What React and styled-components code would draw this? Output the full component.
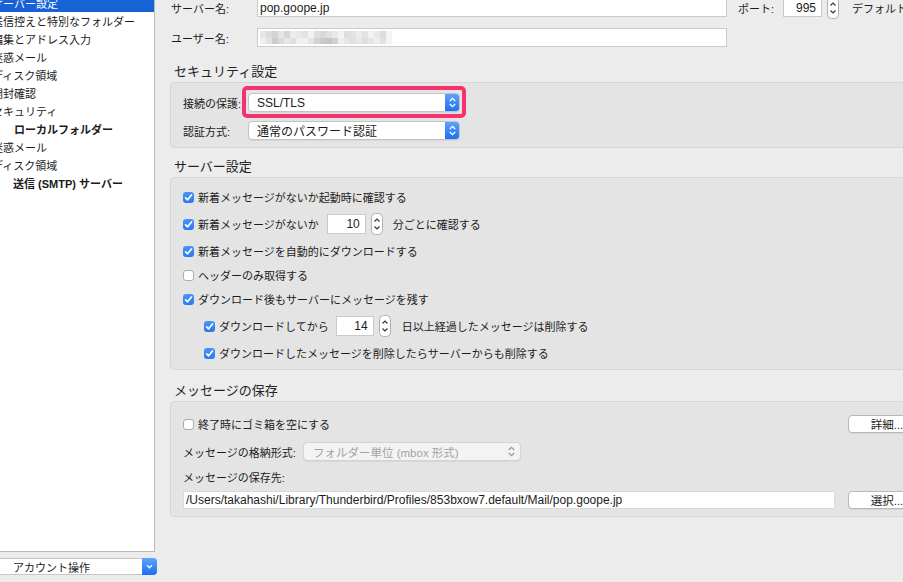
import React from 'react';
import styled, { createGlobalStyle } from 'styled-components';

const GlobalStyle = createGlobalStyle`
  html, body {
    margin: 0;
    padding: 0;
  }
  body {
    background: #ececec;
    font-family: "Liberation Sans", "Noto Sans CJK JP", sans-serif;
    font-size: 11px;
    color: #1c1c1c;
  }
`;

const Window = styled.div`
  width: 903px;
  height: 582px;
  overflow: hidden;
  display: flex;
  background: #ececec;
`;

/* left column: account tree + account actions */
const LeftColumn = styled.div`
  width: 157px;
  flex-shrink: 0;
  display: flex;
  flex-direction: column;
`;

const AccountTree = styled.div`
  width: 154px;
  height: 551px;
  background: #fff;
  border-right: 1px solid #b9b9b9;
  border-bottom: 1px solid #b9b9b9;
  overflow: hidden;
`;

const TreeList = styled.div`
  margin-top: -6px;
  display: flex;
  flex-direction: column;
`;

const TreeRow = styled.div`
  height: 18px;
  display: flex;
  align-items: center;
  white-space: nowrap;
  background: ${p => (p.$selected ? '#1762d6' : 'transparent')};
  color: ${p => (p.$selected ? '#fff' : '#1a1a1a')};
  font-weight: ${p => (p.$bold ? 'bold' : 'normal')};
  font-size: 11px;
`;

const TreeLabel = styled.span`
  margin-left: ${p => p.$indent}px;
`;

const AccountMenu = styled.div`
  margin-top: 6px;
  width: 157px;
  height: 17px;
  box-sizing: border-box;
  display: flex;
  align-items: center;
  background: #fff;
  border: 1px solid #c6c6c6;
  border-left: none;
  border-radius: 0 4px 4px 0;
  font-size: 11px;
`;

const MenuText = styled.span`
  flex: 1;
  padding-left: 13px;
`;

const MenuArrow = styled.div`
  width: 15px;
  height: 17px;
  margin: -1px -1px -1px 0;
  border-radius: 0 4px 4px 0;
  background: linear-gradient(#5fa3fb, #1b6ff0);
  display: flex;
  align-items: center;
  justify-content: center;
`;

/* right pane */
const Main = styled.div`
  width: 790px;
  flex-shrink: 0;
  padding-left: 13px;
  display: flex;
  flex-direction: column;
`;

const TopFields = styled.div`
  margin-top: -2px;
  padding-left: 1px;
  display: flex;
  flex-direction: column;
  gap: 11px;
`;

const FieldRow = styled.div`
  display: flex;
  align-items: center;
  height: ${p => p.$h || 19}px;
  padding-left: ${p => p.$indent || 0}px;
  white-space: nowrap;
`;

const FieldLabel = styled.span`
  width: ${p => p.$w}px;
  flex-shrink: 0;
  margin-left: ${p => p.$ml || 0}px;
`;

const TextBox = styled.div`
  width: ${p => (p.$w ? `${p.$w}px` : 'auto')};
  flex: ${p => (p.$grow ? 1 : 'none')};
  height: ${p => p.$h || 19}px;
  box-sizing: border-box;
  background: #fff;
  border: 1px solid ${p => p.$border || '#cacaca'};
  display: flex;
  align-items: center;
  justify-content: ${p => (p.$right ? 'flex-end' : 'flex-start')};
  padding: 0 ${p => (p.$right ? 5 : 2)}px 0 ${p => (p.$right ? 0 : 2)}px;
  font-size: 12px;
  margin-right: ${p => p.$mr || 0}px;
  overflow: hidden;
`;

const Mosaic = styled.div`
  display: grid;
  grid-template-columns: repeat(22, 6px);
  grid-auto-rows: 6.5px;
`;

const Cell = styled.span`
  background: ${p => p.$c};
`;

const StepperBox = styled.span`
  display: flex;
  margin-left: 5px;
  margin-right: ${p => p.$mr}px;
`;

const Heading = styled.div`
  font-size: 13px;
  height: 16px;
  line-height: 16px;
  margin: ${p => p.$mt}px 0 2px 4px;
  color: #222;
`;

const Group = styled.div`
  width: 765px;
  box-sizing: border-box;
  background: #e4e4e4;
  border: 1px solid #d6d6d6;
  border-radius: 4px;
  padding: ${p => p.$pt}px 8px ${p => p.$pb}px 12px;
  display: flex;
  flex-direction: column;
  gap: ${p => p.$gap}px;
`;

const StackedRows = styled.div`
  display: flex;
  flex-direction: column;
`;

const VSpace = styled.div`
  height: ${p => p.$h}px;
  flex-shrink: 0;
`;

const SelectWrap = styled.div`
  position: relative;
  width: ${p => p.$w}px;
`;

const Select = styled.div`
  height: 19px;
  box-sizing: border-box;
  display: flex;
  align-items: center;
  background: ${p => (p.$disabled ? '#f3f3f3' : '#fff')};
  border: 1px solid ${p => (p.$disabled ? '#d3d3d3' : '#c4c4c4')};
  border-radius: 4px;
  box-shadow: 0 1px 0 rgba(0, 0, 0, 0.05);
  overflow: hidden;
  color: ${p => (p.$disabled ? '#a2a2a2' : '#1a1a1a')};
  font-size: ${p => (p.$disabled ? 11.5 : 12)}px;
`;

const SelectText = styled.span`
  flex: 1;
  padding-left: ${p => p.$pl || 8}px;
  white-space: nowrap;
`;

const SelectArrow = styled.span`
  width: 15px;
  height: 19px;
  margin: -1px -1px -1px 0;
  border-radius: 0 4px 4px 0;
  background: linear-gradient(#60a4fb, #1b6ff0);
  display: flex;
  align-items: center;
  justify-content: center;
`;

const PlainArrow = styled.span`
  width: 18px;
  display: flex;
  align-items: center;
  justify-content: center;
`;

const Highlight = styled.div`
  position: absolute;
  top: -7px;
  bottom: -6px;
  left: -6px;
  right: -6px;
  border: 4px solid #f4326e;
  border-radius: 5px;
  pointer-events: none;
`;

const Box = styled.span`
  width: 11px;
  height: 11px;
  flex-shrink: 0;
  box-sizing: border-box;
  border-radius: 3px;
  margin-right: 4px;
  display: flex;
  align-items: center;
  justify-content: center;
  background: ${p => (p.$on ? 'linear-gradient(#4a93f8, #2a78f3)' : '#fff')};
  border: ${p => (p.$on ? 'none' : '1px solid #ababab')};
`;

const Spacer = styled.span`
  flex: 1;
`;

const Button = styled.div`
  width: 78px;
  height: 18px;
  box-sizing: border-box;
  background: #fff;
  border: 1px solid #b8b8b8;
  border-radius: 4px;
  box-shadow: 0 1px 0 rgba(0, 0, 0, 0.06);
  display: flex;
  align-items: center;
  justify-content: center;
  font-size: 11.5px;
`;

const Gap = styled.span`
  display: inline-block;
  width: ${p => p.$w}px;
  flex-shrink: 0;
`;

const Check = ({ on }) => (
  <Box $on={on}>
    {on && (
      <svg width="9" height="9" viewBox="0 0 9 9">
        <path d="M1.6 4.8 L3.6 6.8 L7.5 2" fill="none" stroke="#fff" strokeWidth="1.7" strokeLinecap="round" strokeLinejoin="round" />
      </svg>
    )}
  </Box>
);

const Stepper = ({ mr = 0 }) => (
  <StepperBox $mr={mr}>
    <svg width="12" height="22" viewBox="0 0 12 22">
      <rect x="0.5" y="0.5" width="11" height="21" rx="4" fill="#fff" stroke="#b0b0b0" />
      <path d="M3.5 8.5 L6 6 L8.5 8.5" fill="none" stroke="#333" strokeWidth="1.1" />
      <path d="M3.5 13.5 L6 16 L8.5 13.5" fill="none" stroke="#333" strokeWidth="1.1" />
    </svg>
  </StepperBox>
);

const UpDown = ({ color = '#fff' }) => (
  <svg width="9" height="13" viewBox="0 0 9 13">
    <path d="M1.8 5 L4.5 2.4 L7.2 5" fill="none" stroke={color} strokeWidth="1.3" />
    <path d="M1.8 8 L4.5 10.6 L7.2 8" fill="none" stroke={color} strokeWidth="1.3" />
  </svg>
);

const treeItems = [
  { label: 'サーバー設定', indent: -8, selected: true },
  { label: '送信控えと特別なフォルダー', indent: -8 },
  { label: '編集とアドレス入力', indent: -8 },
  { label: '迷惑メール', indent: -8 },
  { label: 'ディスク領域', indent: -8 },
  { label: '開封確認', indent: -8 },
  { label: 'セキュリティ', indent: -8 },
  { label: 'ローカルフォルダー', indent: 14, bold: true },
  { label: '迷惑メール', indent: -8 },
  { label: 'ディスク領域', indent: -8 },
  { label: '送信 (SMTP) サーバー', indent: 13, bold: true },
];

// pixelated user name
const mosaic = [
  '#e6e6e6', '#dcdcdc', '#d2d2d2', '#e4e4e4', '#d6d6d6', '#ececec', '#e8e8e8', '#e2e2e2', '#f2f2f2', '#dedede', '#d8d8d8',
  '#e0e0e0', '#e8e8e8', '#f4f4f4', '#dedede', '#e2e2e2', '#ececec', '#e4e4e4', '#f2f2f2', '#e8e8e8', '#dcdcdc', '#f4f4f4',
  '#eeeeee', '#e2e2e2', '#cccccc', '#dadada', '#e6e6e6', '#e0e0e0', '#eeeeee', '#f0f0f0', '#e4e4e4', '#d2d2d2', '#c8c8c8',
  '#c4c4c4', '#d0d0d0', '#eeeeee', '#e6e6e6', '#e0e0e0', '#e8e8e8', '#dddddd', '#e4e4e4', '#eeeeee', '#e2e2e2', '#f4f4f4',
];

export default function App() {
  return (
    <>
      <GlobalStyle />
      <Window>
        <LeftColumn>
          <AccountTree>
            <TreeList>
              {treeItems.map((item, i) => (
                <TreeRow key={i} $selected={item.selected} $bold={item.bold}>
                  <TreeLabel $indent={item.indent}>{item.label}</TreeLabel>
                </TreeRow>
              ))}
            </TreeList>
          </AccountTree>
          <AccountMenu>
            <MenuText>アカウント操作</MenuText>
            <MenuArrow>
              <svg width="9" height="9" viewBox="0 0 9 9">
                <path d="M2 3.3 L4.5 5.8 L7 3.3" fill="none" stroke="#fff" strokeWidth="1.3" />
              </svg>
            </MenuArrow>
          </AccountMenu>
        </LeftColumn>

        <Main>
          <TopFields>
            <FieldRow>
              <FieldLabel $w={86}>サーバー名:</FieldLabel>
              <TextBox $w={470}>pop.goope.jp</TextBox>
              <FieldLabel $w={45} $ml={11}>ポート:</FieldLabel>
              <TextBox $w={39} $right>995</TextBox>
              <Stepper mr={13} />
              <span>デフォルト: 995</span>
            </FieldRow>
            <FieldRow>
              <FieldLabel $w={86}>ユーザー名:</FieldLabel>
              <TextBox $w={470}>
                <Mosaic>
                  {mosaic.map((c, i) => (
                    <Cell key={i} $c={c} />
                  ))}
                </Mosaic>
              </TextBox>
            </FieldRow>
          </TopFields>

          <Heading $mt={17}>セキュリティ設定</Heading>
          <Group $pt={10} $pb={7} $gap={9}>
            <FieldRow>
              <FieldLabel $w={65}>接続の保護:</FieldLabel>
              <SelectWrap $w={212}>
                <Select>
                  <SelectText>SSL/TLS</SelectText>
                  <SelectArrow><UpDown /></SelectArrow>
                </Select>
                <Highlight />
              </SelectWrap>
            </FieldRow>
            <FieldRow>
              <FieldLabel $w={65}>認証方式:</FieldLabel>
              <SelectWrap $w={212}>
                <Select>
                  <SelectText>通常のパスワード認証</SelectText>
                  <SelectArrow><UpDown /></SelectArrow>
                </Select>
              </SelectWrap>
            </FieldRow>
          </Group>

          <Heading $mt={11}>サーバー設定</Heading>
          <Group $pt={10} $pb={7} $gap={6}>
            <FieldRow $h={18}>
              <Check on />
              新着メッセージがないか起動時に確認する
            </FieldRow>
            <FieldRow $h={24}>
              <Check on />
              新着メッセージがないか
              <Gap $w={8} />
              <TextBox $w={39} $h={20} $right>10</TextBox>
              <Stepper mr={10} />
              分ごとに確認する
            </FieldRow>
            <FieldRow $h={18}>
              <Check on />
              新着メッセージを自動的にダウンロードする
            </FieldRow>
            <FieldRow $h={18}>
              <Check />
              ヘッダーのみ取得する
            </FieldRow>
            <FieldRow $h={18}>
              <Check on />
              ダウンロード後もサーバーにメッセージを残す
            </FieldRow>
            <FieldRow $h={24} $indent={21}>
              <Check on />
              ダウンロードしてから
              <Gap $w={7} />
              <TextBox $w={38} $h={20} $right>14</TextBox>
              <Stepper mr={11} />
              日以上経過したメッセージは削除する
            </FieldRow>
            <FieldRow $h={18} $indent={21}>
              <Check on />
              ダウンロードしたメッセージを削除したらサーバーからも削除する
            </FieldRow>
          </Group>

          <Heading $mt={13}>メッセージの保存</Heading>
          <Group $pt={13} $pb={7} $gap={0}>
            <FieldRow $h={18}>
              <Check />
              終了時にゴミ箱を空にする
              <Spacer />
              <Button>詳細...</Button>
            </FieldRow>
            <StackedRows>
              <VSpace $h={9} />
              <FieldRow>
                <FieldLabel $w={120}>メッセージの格納形式:</FieldLabel>
                <SelectWrap $w={218}>
                  <Select $disabled>
                    <SelectText $pl={9}>フォルダー単位 (mbox 形式)</SelectText>
                    <PlainArrow><UpDown color="#9a9a9a" /></PlainArrow>
                  </Select>
                </SelectWrap>
              </FieldRow>
              <VSpace $h={8} />
              <FieldRow $h={16}>メッセージの保存先:</FieldRow>
              <VSpace $h={6} />
              <FieldRow $h={18}>
                <TextBox $grow $h={18} $mr={13} $border="#dadada">
                  /Users/takahashi/Library/Thunderbird/Profiles/853bxow7.default/Mail/pop.goope.jp
                </TextBox>
                <Button>選択...</Button>
              </FieldRow>
            </StackedRows>
          </Group>
        </Main>
      </Window>
    </>
  );
}
